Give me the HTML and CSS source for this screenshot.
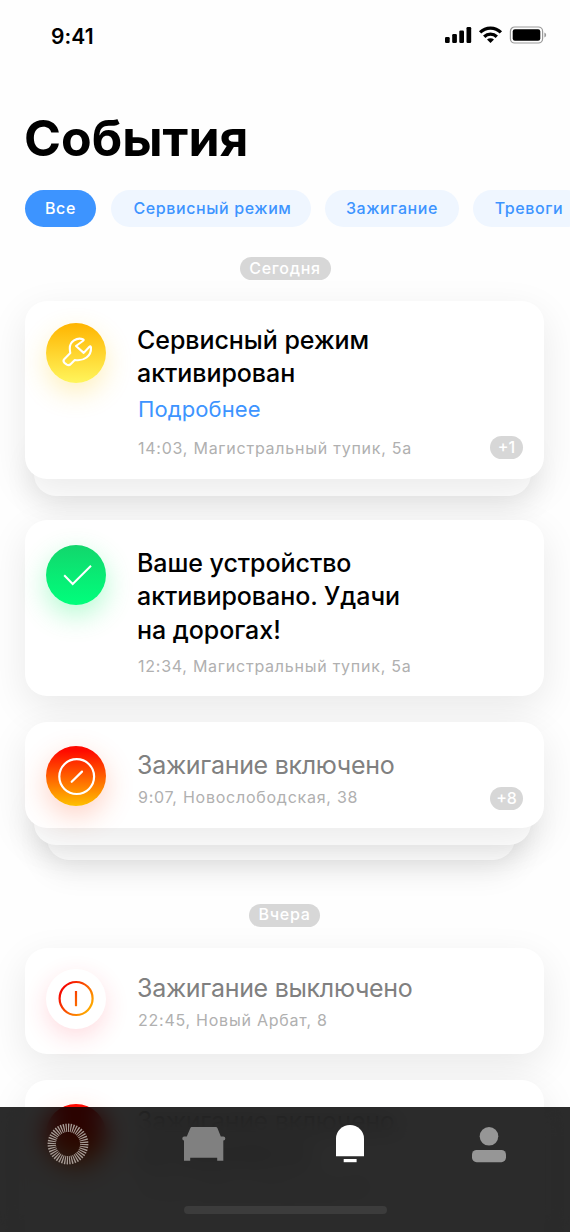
FILE: index.html
```
<!DOCTYPE html>
<html lang="ru">
<head>
<meta charset="utf-8">
<title>События</title>
<link rel="stylesheet" href="styles.css">
</head>
<body>
<div class="screen">
  <header class="status">
    <span class="clock">9:41</span>
    <svg class="status-icons" width="102" height="18" viewBox="0 0 102 18">
      <rect x="0" y="11" width="4.7" height="6" rx="1.2"/>
      <rect x="7.2" y="8" width="4.7" height="9" rx="1.2"/>
      <rect x="14.3" y="4.6" width="4.7" height="12.4" rx="1.2"/>
      <rect x="21.5" y="1" width="4.7" height="16" rx="1.2"/>
      <g fill="none" stroke="#000" stroke-width="3.3">
        <path d="M35.1 6.3a14.8 14.8 0 0 1 20.8 0"/>
        <path d="M39.2 10.7a9 9 0 0 1 12.6 0"/>
      </g>
      <path d="M45.5 17l-3.5-3.4a5 5 0 0 1 7 0z"/>
      <rect x="65.4" y="1" width="32.2" height="16" rx="4.3" fill="none" stroke="#999" stroke-width="1.2"/>
      <rect x="67.7" y="3.3" width="27.6" height="11.4" rx="2.2"/>
      <path d="M99.4 6.5q1.8.6 1.8 2.5t-1.8 2.5z" fill="#999"/>
    </svg>
  </header>

  <h1 class="title">События</h1>

  <nav class="chips">
    <span class="chip chip-all">Все</span>
    <span class="chip chip-service">Сервисный режим</span>
    <span class="chip chip-ignition">Зажигание</span>
    <span class="chip chip-alarm">Тревоги</span>
  </nav>

  <main class="feed">
    <div class="day today"><span>Сегодня</span></div>

    <section class="stack service">
      <div class="sheet sheet-1"></div>
      <article class="card">
        <div class="icon icon-yellow">
          <svg width="60" height="60" viewBox="0 0 60 60" fill="none" stroke="#fff" stroke-width="2.1" stroke-linejoin="round">
            <path d="M37 16.3C31 14 23.5 18.5 23.8 25.5Q23.9 28 24.3 30L18.2 36.3Q16.7 38 18.4 39.8L20.8 41.6Q23 43 24.8 41L28.8 37C38 38.5 45.5 33 45 24.5Q44.7 22.5 43.2 24L37.7 29.9L30 23L36.8 18Q38.5 16.8 37 16.3Z"/>
          </svg>
        </div>
        <div class="body">
          <h2 class="heading">Сервисный режим<br>активирован</h2>
          <a class="more">Подробнее</a>
          <p class="meta">14:03, Магистральный тупик, 5а</p>
        </div>
        <span class="count">+1</span>
      </article>
    </section>

    <section class="stack activated">
      <article class="card">
        <div class="icon icon-green">
          <svg width="60" height="60" viewBox="0 0 60 60" fill="none" stroke="#fff" stroke-width="2">
            <path d="M18.2 30.2L26.7 39L45 20.8"/>
          </svg>
        </div>
        <div class="body">
          <h2 class="heading">Ваше устройство<br>активировано. Удачи<br>на дорогах!</h2>
          <p class="meta">12:34, Магистральный тупик, 5а</p>
        </div>
      </article>
    </section>

    <section class="stack ignition-on">
      <div class="sheet sheet-2"></div>
      <div class="sheet sheet-1"></div>
      <article class="card">
        <div class="icon icon-red">
          <svg width="60" height="60" viewBox="0 0 60 60" fill="none" stroke="#fff" stroke-width="2.2" stroke-linecap="round">
            <circle cx="30.7" cy="30.6" r="17.4"/>
            <path d="M25.7 35.8L36 25.6"/>
          </svg>
        </div>
        <div class="body">
          <h2 class="heading read">Зажигание включено</h2>
          <p class="meta">9:07, Новослободская, 38</p>
        </div>
        <span class="count">+8</span>
      </article>
    </section>

    <div class="day yesterday"><span>Вчера</span></div>

    <section class="stack ignition-off">
      <article class="card">
        <div class="icon icon-white">
          <svg width="60" height="60" viewBox="0 0 60 60" fill="none" stroke="url(#ring)" stroke-width="2.2">
            <defs>
              <linearGradient id="ring" gradientUnits="userSpaceOnUse" x1="16" y1="22" x2="44" y2="42">
                <stop offset="0" stop-color="#f50a00"/><stop offset="1" stop-color="#ffb000"/>
              </linearGradient>
            </defs>
            <circle cx="30.1" cy="29.5" r="16.5"/>
            <path d="M30 22V37.2"/>
          </svg>
        </div>
        <div class="body">
          <h2 class="heading read">Зажигание выключено</h2>
          <p class="meta">22:45, Новый Арбат, 8</p>
        </div>
      </article>
    </section>

    <section class="stack last">
      <article class="card">
        <div class="icon icon-red"></div>
        <div class="body">
          <h2 class="heading read">Зажигание включено,<br>не охраняется</h2>
          <p class="meta">21:30, Новослободская, 38</p>
        </div>
      </article>
    </section>
  </main>

  <nav class="tabs">
    <div class="tab-row">
      <svg class="tab-radar" width="42" height="42" viewBox="0 0 42 42" fill="none">
        <circle cx="21" cy="21" r="16.2" stroke="#a79c96" stroke-width="8.4" pathLength="88" stroke-dasharray="1.05 .95"/>
      </svg>
      <svg class="tab-car" width="44" height="36" viewBox="0 0 44 36" fill="#808080">
        <path d="M9.7 0H33.7Q35 0 35.5 1.2L38.8 9.5H41.3Q43.3 9.5 43.3 11.5Q43.3 13.4 41.3 13.4V33.7H35.2V30.7H8.2V33.7H2V13.4Q.3 13.4.3 11.5Q.3 9.5 2.3 9.5H4.8L8.4 1.1Q8.8 0 9.7 0Z"/>
      </svg>
      <svg class="tab-bell" width="28" height="38" viewBox="0 0 28 38" fill="#fff">
        <path d="M0 31.2V13.5a14 13.5 0 0 1 28 0V31.2Z"/><rect x="7.7" y="34" width="12.9" height="3.2"/>
      </svg>
      <svg class="tab-user" width="34" height="36" viewBox="0 0 34 36" fill="#969696">
        <circle cx="17" cy="9.3" r="9.3"/><rect x="0" y="23" width="34" height="12.2" rx="4.6"/>
      </svg>
    </div>
    <div class="home"></div>
  </nav>
</div>
</body>
</html>
```
FILE: styles.css
```
* { box-sizing: border-box; margin: 0; padding: 0; }
body { background: #fff; }
.screen {
  position: relative;
  width: 570px;
  height: 1232px;
  overflow: hidden;
  background: #fefefe;
  color: #000;
  font-family: Inter, "Noto Sans", sans-serif;
}
.status {
  height: 72px;
  padding: 0 23px 0 51px;
  display: flex;
  align-items: center;
  justify-content: space-between;
}
.clock { padding-top: 1px; font-size: 21px; font-weight: 600; line-height: 24px; letter-spacing: .1px; }
.status-icons { margin-bottom: 2px; }
.title {
  margin: 36px 0 0 24px;
  font-size: 50px;
  line-height: 60px;
  font-weight: 700;
  white-space: nowrap;
}
.chips {
  display: flex;
  gap: 14px;
  margin: 22px 0 0 25px;
}
.chip {
  flex: none;
  height: 37px;
  border-radius: 19px;
  background: #eff6ff;
  color: #3d94ff;
  font-size: 16px;
  font-weight: 500;
  line-height: 37px;
  letter-spacing: .6px;
  text-align: center;
  white-space: nowrap;
}
.chip-all { width: 71px; margin-right: 1px; background: #3d94ff; color: #fff; }
.chip-service { width: 200px; padding-left: 3px; }
.chip-ignition { width: 134px; }
.chip-alarm { width: 112px; }
.day { display: flex; justify-content: center; }
.day span {
  height: 23px;
  border-radius: 12px;
  background: #d7d7d7;
  color: #fff;
  font-size: 16px;
  font-weight: 500;
  line-height: 22px;
  letter-spacing: .7px;
  text-align: center;
}
.today { margin-top: 30px; }
.today span { width: 91px; }
.yesterday { margin: 76px 1px 0 0; }
.yesterday span { width: 71px; line-height: 21px; }
.stack { position: relative; width: 519px; margin-left: 25px; }
.card {
  position: relative;
  display: flex;
  height: 100%;
  border-radius: 22px;
  background: #fff;
  box-shadow: 0 12px 38px rgba(0, 0, 0, .085);
}
.service { height: 178px; margin-top: 21px; }
.activated { height: 176px; margin-top: 41px; }
.ignition-on { height: 106px; margin-top: 26px; }
.ignition-off { height: 106px; margin-top: 21px; }
.last { height: 174px; margin-top: 26px; }
.sheet {
  position: absolute;
  height: 60px;
  border-radius: 22px;
  background: #fff;
  box-shadow: 0 10px 32px rgba(0, 0, 0, .09);
}
.sheet-1 { left: 9px; right: 13px; bottom: -17px; }
.sheet-2 { left: 22px; right: 29px; bottom: -32px; }
.icon {
  flex: none;
  width: 60px;
  height: 60px;
  margin: 24px 0 0 21px;
  border-radius: 50%;
}
.icon svg { display: block; }
.service .icon { margin-top: 22px; }
.activated .icon { margin-top: 25px; }
.ignition-off .icon { margin-top: 21px; }
.icon-yellow { background: linear-gradient(#ffb400, #fff55c); box-shadow: 0 10px 26px rgba(255, 205, 40, .3); }
.icon-green { background: linear-gradient(#12d66c, #00ff7c); box-shadow: 0 10px 28px rgba(0, 240, 100, .3); }
.icon-red { background: linear-gradient(#ff0a00 8%, #ffc000); box-shadow: 0 10px 28px rgba(255, 80, 30, .26); }
.last .icon-red { background: linear-gradient(#ff0a00 40%, #ff7000); }
.icon-white { background: #fff; box-shadow: 0 8px 24px rgba(255, 40, 60, .16); }
.body { padding: 23px 0 0 31px; }
.activated .body { padding-top: 27px; }
.ignition-on .body { padding-top: 27px; }
.ignition-off .body { padding-top: 24px; }
.last .body { padding-top: 25px; }
.heading {
  font-size: 25px;
  font-weight: 500;
  line-height: 33.3px;
  letter-spacing: -.05px;
  white-space: nowrap;
}
.read { color: #808080; font-weight: 400; letter-spacing: -.3px; }
.more {
  display: block;
  padding-left: 1px;
  color: #3d94ff;
  font-size: 22px;
  line-height: 37px;
  letter-spacing: .1px;
}
.meta {
  padding-left: 1px;
  color: #b0b0b0;
  font-size: 16px;
  line-height: 31px;
  letter-spacing: .75px;
  white-space: nowrap;
}
.service .meta { line-height: 41px; }
.activated .meta { line-height: 39px; }
.count {
  position: absolute;
  right: 21px;
  bottom: 20px;
  width: 33px;
  height: 23px;
  border-radius: 12px;
  background: #d7d7d7;
  color: #fff;
  font-size: 16px;
  font-weight: 500;
  line-height: 23px;
  text-align: center;
}
.ignition-on .count { bottom: 18px; }
.tabs {
  position: absolute;
  left: 0;
  right: 0;
  bottom: 0;
  height: 125px;
  background: rgba(0, 0, 0, .83);
  -webkit-backdrop-filter: blur(12px);
  backdrop-filter: blur(12px);
}
.tab-row {
  display: flex;
  align-items: center;
  height: 74px;
  padding-left: 47px;
}
.tab-car { margin: 2px 0 0 93px; }
.tab-bell { margin: 0 0 0 110px; }
.tab-user { margin: 1px 0 0 108px; }
.home {
  width: 203px;
  height: 8px;
  margin: 25px 0 0 184px;
  border-radius: 4px;
  background: #3c3c3c;
}
```
